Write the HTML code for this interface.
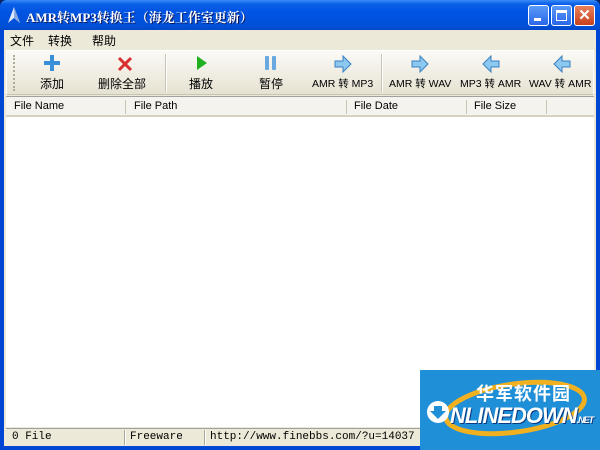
<!DOCTYPE html>
<html><head><meta charset="utf-8"><style>
*{margin:0;padding:0;box-sizing:border-box}
body{width:600px;height:450px;overflow:hidden;background:#0a246a;font-family:"Liberation Sans","Noto Sans CJK SC",sans-serif;font-size:12px;position:relative}
.win{position:absolute;left:0;top:0;width:600px;height:450px;background:linear-gradient(#0a5ee0,#0046d5 20px);border-radius:7px 7px 0 0}
.title{position:absolute;left:0;top:0;width:600px;height:30px;background:linear-gradient(#3a8cf5 0,#0a5fe8 4px,#0054e3 12px,#0050d8 26px,#0046c8 30px);border-radius:7px 7px 0 0}
.ttext{position:absolute;left:26px;top:7px;color:#fff;font-weight:bold;font-size:13px;font-family:"Liberation Serif","Noto Serif CJK SC",serif;text-shadow:1px 1px #0a1a60}
.btn{position:absolute;top:5px;width:21px;height:21px;border:1px solid #fff;border-radius:3px;background:linear-gradient(#5a9af8,#2a66e8)}
.close{background:linear-gradient(#e8805a,#c8401c)}
.client{position:absolute;left:4px;top:30px;width:592px;height:416px;background:#ece9d8}
.menu{position:absolute;left:6px;top:2px;height:18px;font-size:12px}
.menu span{margin-right:14px}
.tb{position:absolute;left:2px;top:20px;width:588px;height:45px;background:linear-gradient(#fbfaf6,#e6e2d2);border:1px solid #fff;border-bottom:1px solid #c8c4b4}
.tbi{position:absolute;top:24px;font-size:12px;text-align:center;white-space:nowrap}
.sm{font-size:10.5px;top:25px}
.sep{position:absolute;top:3px;width:2px;height:38px;border-left:1px solid #c8c4b4;border-right:1px solid #fff}
.hdr{position:absolute;left:2px;top:66px;width:588px;height:21px;background:#f4f3ee;border-bottom:2px solid #d6d2c2;border-top:1px solid #a0a0a0}
.hdr span{position:absolute;top:3px;font-size:11px}
.hs{position:absolute;top:3px;width:1px;height:14px;background:#c8c4b4}
.list{position:absolute;left:2px;top:87px;width:588px;height:310px;background:#fff}
.status{position:absolute;left:2px;top:398px;width:588px;height:18px;font-family:"Liberation Mono","Noto Sans CJK SC",monospace;font-size:11px;border-top:1px solid #a0a0a0}
.status span{position:absolute;top:2px}
.ss{position:absolute;top:1px;width:2px;height:15px;border-left:1px solid #aca899;border-right:1px solid #fff}
.logo{position:absolute;left:420px;top:370px;width:180px;height:80px;background:#1f90d8;overflow:hidden}
</style></head><body>
<div class="win">
<div class="title">
<svg style="position:absolute;left:8px;top:7px" width="12" height="16"><path d="M6 0L0 16L6 11L12 16Z" fill="#dfe8ff"/><path d="M6 0L6 11L12 16Z" fill="#8aa8e0"/></svg>
<div class="ttext">AMR转MP3转换王（海龙工作室更新）</div>
<div class="btn" style="left:528px"><div style="position:absolute;left:5px;top:12px;width:7px;height:3px;background:#fff"></div></div>
<div class="btn" style="left:551px"><div style="position:absolute;left:4px;top:4px;width:11px;height:11px;border:1px solid #fff;border-top-width:3px"></div></div>
<div class="btn close" style="left:574px"><div style="position:absolute;left:0;top:0;width:19px;text-align:center;color:#fff;font-weight:bold;font-size:15px;line-height:19px">✕</div></div>
</div>
<div class="client">
<div class="menu"><span>文件</span><span>转换</span><span style="margin-left:6px">帮助</span></div>
<div class="tb">
<div style="position:absolute;left:6px;top:4px;width:2px;height:36px;border-left:2px dotted #b0ac9c"></div>
<svg style="position:absolute;left:37px;top:4px" width="16" height="16"><path d="M6 0h4v6h6v4h-6v6h-4v-6h-6v-4h6z" fill="#3a90d8"/></svg>
<div class="tbi" style="left:33px">添加</div>
<svg style="position:absolute;left:110px;top:5px" width="16" height="16"><path d="M2 2L14 14M14 2L2 14" stroke="#d83030" stroke-width="3"/></svg>
<div class="tbi" style="left:91px">删除全部</div>
<div class="sep" style="left:158px"></div>
<svg style="position:absolute;left:189px;top:4px" width="12" height="16"><path d="M1 1L11 8L1 15Z" fill="#20b020"/></svg>
<div class="tbi" style="left:182px">播放</div>
<svg style="position:absolute;left:257px;top:4px" width="14" height="16"><rect x="1" y="1" width="4" height="14" rx="1" fill="#6aa8e0"/><rect x="8" y="1" width="4" height="14" rx="1" fill="#6aa8e0"/></svg>
<div class="tbi" style="left:252px">暂停</div>
<svg style="position:absolute;left:327px;top:4px" width="18" height="18"><path d="M1 6h8v-5l8 8l-8 8v-5h-8z" fill="#8cc8f0" stroke="#3a80c0"/></svg>
<div class="tbi sm" style="left:305px">AMR 转 MP3</div>
<div class="sep" style="left:374px"></div>
<svg style="position:absolute;left:404px;top:4px" width="18" height="18"><path d="M1 6h8v-5l8 8l-8 8v-5h-8z" fill="#8cc8f0" stroke="#3a80c0"/></svg>
<div class="tbi sm" style="left:382px">AMR 转 WAV</div>
<svg style="position:absolute;left:475px;top:4px" width="18" height="18"><path d="M17 6h-8v-5l-8 8l8 8v-5h8z" fill="#8cc8f0" stroke="#3a80c0"/></svg>
<div class="tbi sm" style="left:453px">MP3 转 AMR</div>
<svg style="position:absolute;left:546px;top:4px" width="18" height="18"><path d="M17 6h-8v-5l-8 8l8 8v-5h8z" fill="#8cc8f0" stroke="#3a80c0"/></svg>
<div class="tbi sm" style="left:522px">WAV 转 AMR</div>
</div>
<div class="hdr">
<span style="left:8px">File Name</span><div class="hs" style="left:119px"></div>
<span style="left:128px">File Path</span><div class="hs" style="left:340px"></div>
<span style="left:348px">File Date</span><div class="hs" style="left:460px"></div>
<span style="left:468px">File Size</span><div class="hs" style="left:540px"></div>
</div>
<div class="list"></div>
<div class="status">
<span style="left:6px">0 File</span><div class="ss" style="left:118px"></div>
<span style="left:124px">Freeware</span><div class="ss" style="left:198px"></div>
<span style="left:204px">http://www.finebbs.com/?u=14037</span>
</div>
</div>
<div class="logo">
<svg width="180" height="80" style="position:absolute;left:0;top:0"><ellipse cx="95" cy="38" rx="70" ry="24" fill="none" stroke="#f0b020" stroke-width="5" transform="rotate(-8 95 38)"/><circle cx="18" cy="42" r="11" fill="#fff"/><path d="M14 36h8v5h4l-8 8l-8-8h4z" fill="#1f90d8"/></svg>
<div style="position:absolute;left:56px;top:10px;font-size:18px;font-weight:bold;color:#fff;letter-spacing:1px">华军软件园</div>
<div style="position:absolute;left:30px;top:33px;font-size:22px;font-weight:bold;font-style:italic;color:#fff;letter-spacing:-1px;text-shadow:1px 1px #0a3a80">NLINEDOWN<span style="font-size:9px">.NET</span></div>
</div>
</div>
</body></html>
